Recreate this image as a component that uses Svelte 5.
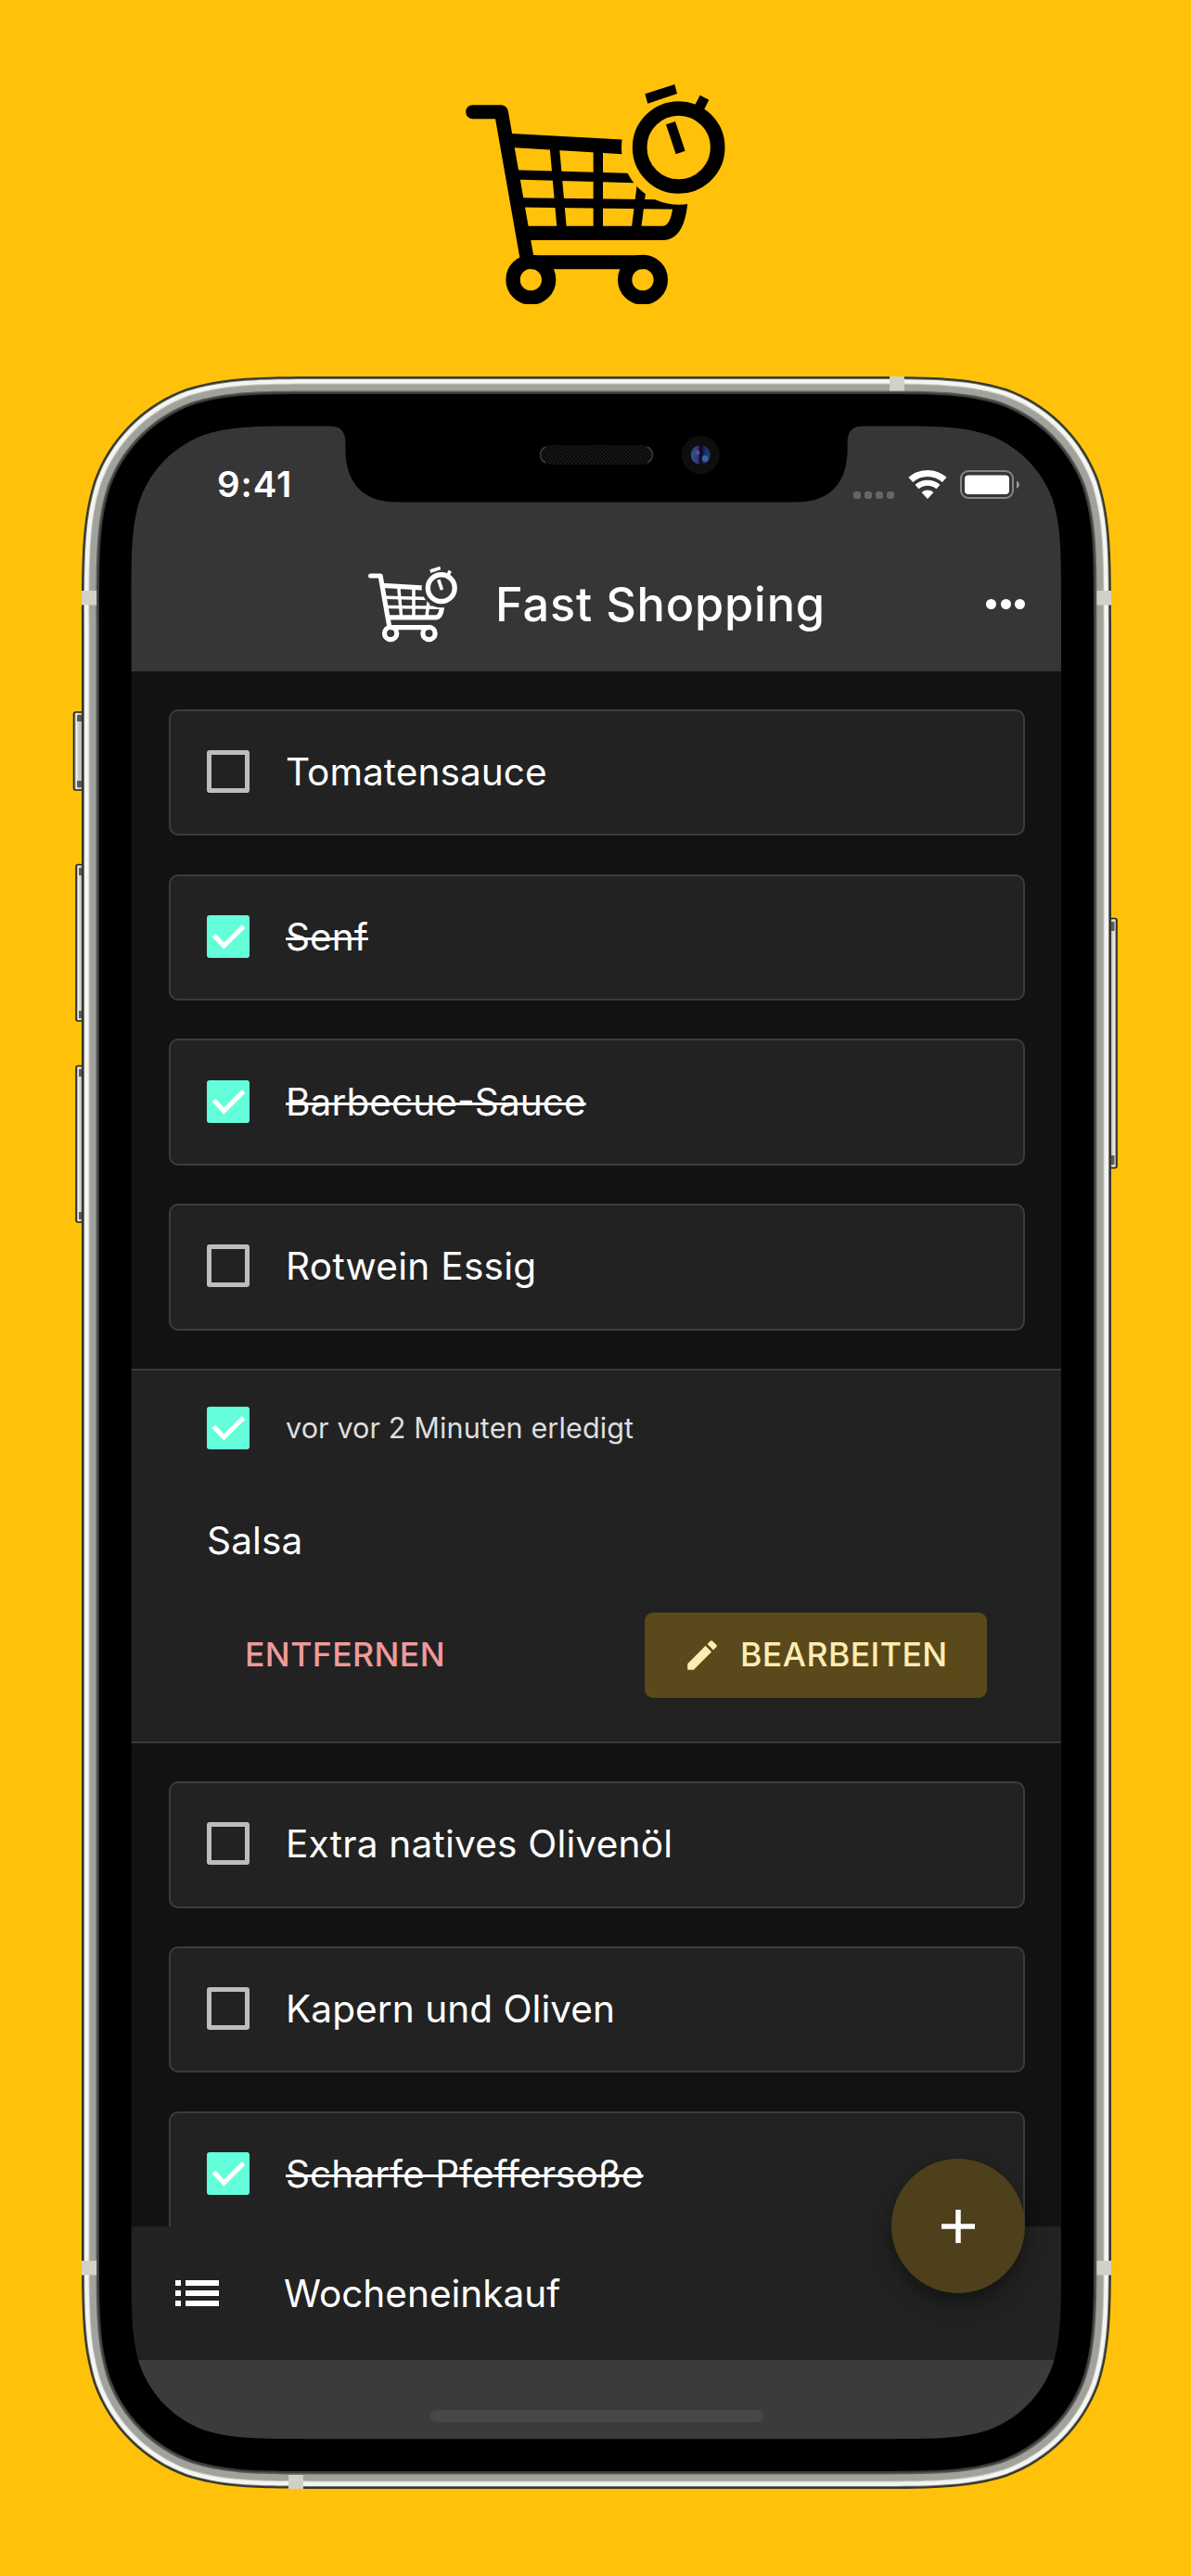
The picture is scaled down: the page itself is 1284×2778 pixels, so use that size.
<script>
  const before = [
    { name: 'Tomatensauce', done: false, fit: 'regular' },
    { name: 'Senf', done: true, fit: 'regular' },
    { name: 'Barbecue-Sauce', done: true, fit: 'raised' },
    { name: 'Rotwein Essig', done: false, fit: 'wide' },
  ];
  const after = [
    { name: 'Extra natives Olivenöl', done: false, fit: 'airy' },
    { name: 'Kapern und Oliven', done: false, fit: 'regular' },
    { name: 'Scharfe Pfeffersoße', done: true, fit: 'regular' },
  ];

  // Rounded rectangle with continuous-curvature corners.
  function squircle(x, y, w, h, r) {
    const corner = [
      [1.0885, 0], [0.8684, 0], [0.6315, 0.0749],
      [0.3728, 0.1691], [0.1691, 0.3728], [0.0749, 0.6315],
      [0, 0.8684], [0, 1.0885], [0, 1.5287],
    ];
    const place = (fx, fy, list) =>
      list.map(([a, b]) => `${(fx ? x + w - a * r : x + a * r).toFixed(2)} ${(fy ? y + h - b * r : y + b * r).toFixed(2)}`);
    const curve = (p) => `C${p.slice(0, 3).join(' ')}C${p.slice(3, 6).join(' ')}C${p.slice(6, 9).join(' ')}`;
    const full = [[1.5287, 0], ...corner];
    const rev = [...full].reverse();
    const tr = place(1, 0, full), br = place(1, 1, rev), bl = place(0, 1, full), tl = place(0, 0, rev);
    return `M${tr[0]}${curve(tr.slice(1))}L${br[0]}${curve(br.slice(1))}L${bl[0]}${curve(bl.slice(1))}L${tl[0]}${curve(tl.slice(1))}Z`;
  }

  const inset = (n, r) => squircle(n, n, 1110 - 2 * n, 2278 - 2 * n, r);
  const bezel = inset(19, 159) + squircle(53.6, 53.4, 1002.4, 2170.8, 125);
  // Metal bands end underneath the bezel, so only the bezel has an edge at the screen.
  const ring = (n, r) => inset(n, r) + inset(28, 150);
</script>

{#snippet cart(id)}
  <svg class="cart" viewBox="66 63 840 712" fill="none" stroke="currentColor">
    <mask id={id} maskUnits="userSpaceOnUse" x="0" y="0" width="990" height="840">
      <rect width="990" height="840" fill="#fff" stroke="none" />
      <circle cx="755" cy="267" r="185" fill="#000" stroke="none" />
    </mask>
    <g mask="url(#{id})">
      <path d="M89 152H181L265 630" stroke-width="45" stroke-linecap="round" stroke-linejoin="round" />
      <path d="M200 221L600 243V290L200 266Z" fill="currentColor" stroke="none" />
      <path d="M220 355L640 367M240 445L760 452" stroke-width="31" />
      <path d="M353 260L377 530M494.500 265V530M638 370L618 530" stroke-width="31" />
      <path d="M260 544H703C742 544 758 500 762 430" stroke-width="46" />
    </g>
    <path d="M277 638.500H640" stroke-width="45" />
    <circle cx="277" cy="695" r="58" stroke-width="46" />
    <circle cx="639" cy="695" r="58" stroke-width="46" />
    <circle cx="755" cy="267" r="126" stroke-width="47" />
    <path d="M646 94L742 63L750 93L655 125ZM824 98L853 113L832 155L805 135ZM714 193L744 183L776 278L746 289Z" fill="currentColor" stroke="none" />
  </svg>
{/snippet}

{#snippet checkbox(done)}
  <span class="box" class:done>
    {#if done}
      <svg viewBox="0 0 46 46"><path d="M7.500 21.500L18.400 33L39.500 12" fill="none" stroke="#fff" stroke-width="5" /></svg>
    {/if}
  </span>
{/snippet}

{#snippet card(item)}
  <li class="card">
    {@render checkbox(item.done)}
    <span class="name {item.fit}" class:struck={item.done}>{item.name}</span>
  </li>
{/snippet}

<main>
  <div class="hero">{@render cart('hero-cut')}</div>

  <div class="phone">
    <div class="screen">
      <header>
        <div class="status">
          <span class="time">9:41</span>
          <div class="indicators">
            <div class="signal"><i></i><i></i><i></i><i></i></div>
            <svg class="wifi" viewBox="-21 -31 42 31" fill="none" stroke="#fff">
              <path d="M-18.200 -20.600A27.500 27.500 0 0 1 18.200 -20.600" stroke-width="7" />
              <path d="M-11.500 -13A17.400 17.400 0 0 1 11.500 -13" stroke-width="6" />
              <path d="M0 0L-6.500 -7A9.800 9.800 0 0 1 6.500 -7Z" fill="#fff" stroke="none" />
            </svg>
            <svg class="battery" viewBox="0 0 65 31">
              <rect x="1" y="1" width="56" height="29" rx="8" fill="none" stroke="#868686" stroke-width="2" />
              <rect x="5" y="5.500" width="48" height="20.500" rx="4" fill="#fff" />
              <path d="M61 11.500Q64 13 64 15.500T61 20Z" fill="#9a9a9a" />
            </svg>
          </div>
        </div>
        <div class="appbar">
          <div class="brand">{@render cart('brand-cut')}</div>
          <h1>Fast Shopping</h1>
          <div class="more"><i></i><i></i><i></i></div>
        </div>
      </header>

      <div class="content">
        <ul>
          {#each before as item}{@render card(item)}{/each}
          <li class="open">
            <div class="meta">
              {@render checkbox(true)}
              <span class="ago">vor vor 2 Minuten erledigt</span>
            </div>
            <div class="title">Salsa</div>
            <div class="actions">
              <button class="remove">ENTFERNEN</button>
              <button class="edit">
                <svg viewBox="0 0 24 24"><path fill="currentColor" d="M3 17.250V21h3.750L17.810 9.940l-3.750-3.750L3 17.250zM20.710 7.040a1 1 0 0 0 0-1.410l-2.340-2.340a1 1 0 0 0-1.410 0l-1.830 1.830 3.750 3.750 1.830-1.830z" /></svg>
                <span>BEARBEITEN</span>
              </button>
            </div>
          </li>
          {#each after as item}{@render card(item)}{/each}
        </ul>
      </div>

      <footer>
        <svg class="list" viewBox="0 0 47 28" fill="#fff"><path d="M0 0H6V6H0ZM11 0H47V6H11ZM0 11H6V17H0ZM11 11H47V17H11ZM0 22H6V28H0ZM11 22H47V28H11Z" /></svg>
        <span class="listname">Wocheneinkauf</span>
        <button class="fab" aria-label="+">
          <svg viewBox="0 0 36 36"><path d="M18 0V36M0 18H36" stroke="#fff" stroke-width="5.500" /></svg>
        </button>
      </footer>
      <div class="home"><span></span></div>
    </div>

    <svg class="frame" viewBox="-12 0 1134 2278" fill-rule="evenodd">
      <defs>
        <linearGradient id="key" x1="0" x2="1" y1="0" y2="0">
          <stop offset="0" stop-color="#55564f" /><stop offset=".25" stop-color="#f0f0ec" />
          <stop offset=".5" stop-color="#c4c5c0" /><stop offset="1" stop-color="#b4b5b0" />
        </linearGradient>
        <linearGradient id="keyright" x1="1" x2="0" y1="0" y2="0">
          <stop offset="0" stop-color="#55564f" /><stop offset=".25" stop-color="#f0f0ec" />
          <stop offset=".5" stop-color="#c4c5c0" /><stop offset="1" stop-color="#b4b5b0" />
        </linearGradient>
        <pattern id="mesh" width="4" height="4" patternUnits="userSpaceOnUse">
          <rect width="4" height="4" fill="#090909" /><rect width="2" height="2" fill="#171717" /><rect x="2" y="2" width="2" height="2" fill="#171717" />
        </pattern>
        <linearGradient id="lens" x1="0" x2="1">
          <stop offset="0" stop-color="#1c5f96" /><stop offset=".35" stop-color="#3a3472" />
          <stop offset=".5" stop-color="#07071a" /><stop offset=".75" stop-color="#1d2f78" /><stop offset="1" stop-color="#164068" />
        </linearGradient>
      </defs>
      <g stroke="#22221c" stroke-width="1.500">
        <rect x="-8.500" y="362" width="12" height="84" rx="2" fill="url(#key)" />
        <rect x="-6" y="526.500" width="10" height="168.500" rx="2" fill="url(#key)" />
        <rect x="-6" y="743.500" width="10" height="168.500" rx="2" fill="url(#key)" />
        <rect x="1105" y="584.500" width="11" height="269" rx="2" fill="url(#keyright)" />
      </g>
      <path d="M-5 365H0V372H-5ZM-5 436H0V443H-5ZM-3 530H0V538H-3ZM-3 684H0V692H-3ZM-3 747H0V755H-3ZM-3 901H0V909H-3ZM1110 588H1113.500V598H1110ZM1110 840H1113.500V850H1110Z" fill="#3e3e38" opacity=".8" />
      <path d={ring(0, 178)} fill="#34362c" />
      <path d={ring(2, 176)} fill="#74766f" />
      <path d={ring(3, 175)} fill="#f4f5f1" />
      <path d={ring(7.5, 170.5)} fill="#c8c9c4" />
      <path d={ring(8.5, 169.5)} fill="#a1a29b" />
      <path d={ring(15.5, 162.5)} fill="#5c5c58" />
      <path d={ring(17, 161)} fill="#3c3c3c" />
      <path d={bezel} fill="#000" />
      <path d="M0 231H16V246.500H0ZM1094.500 231H1110V246.500H1094.500ZM0 2032H16V2047.500H0ZM1094.500 2032H1110V2047.500H1094.500ZM871 0H887V15.500H871ZM223 2263H239V2278H223Z" fill="#d1d1c7" />
      <path d="M267 52V53.400H268C280 53.400 284.400 60 284.400 72V78C284.400 116 304 135.500 340 135.500H770C806 135.500 825.600 116 825.600 78V72C825.600 60 830 53.400 842 53.400H843V52Z" fill="#000" />
      <rect x="494.500" y="74.500" width="121" height="20" rx="10" fill="url(#mesh)" stroke="#101010" />
      <path d="M500 76Q494.500 79 494.500 84.500T500 93M610 76Q615.500 79 615.500 84.500T610 93" fill="none" stroke="#3c3c3c" stroke-width="1.500" />
      <circle cx="667.300" cy="84.500" r="20.500" fill="#0e0e0e" />
      <circle cx="667.300" cy="84.500" r="10.500" fill="url(#lens)" />
      <circle cx="672" cy="88.500" r="3.500" fill="#3a78a4" opacity=".8" />
      <circle cx="664" cy="82" r="2.500" fill="#704a9c" opacity=".8" />
    </svg>
  </div>
</main>

<style>
  :global(body) { background: #ffc10a; }
  main {
    width: 1284px;
    height: 2778px;
    overflow: hidden;
    background: #ffc10a;
    font-family: Inter, "Liberation Sans", sans-serif;
    color: #fff;
    display: flex;
    flex-direction: column;
  }
  h1, ul { margin: 0; padding: 0; font-weight: inherit; list-style: none; }
  svg { display: block; }
  i { display: block; }
  span, h1 { white-space: nowrap; }
  button { border: 0; background: none; padding: 0; font: inherit; color: inherit; }

  .hero { height: 315px; flex: none; padding: 91px 0 0 502px; color: #000; }
  .hero .cart { width: 280px; }
  .phone { position: relative; box-sizing: border-box; margin-left: 88px; padding: 53px; width: 1110px; height: 2278px; flex: none; }
  .frame { position: absolute; left: -12px; top: 0; width: 1134px; height: 2278px; pointer-events: none; }

  .screen {
    width: 1004px;
    height: 2172px;
    display: flex;
    flex-direction: column;
    background: #121212;
    overflow: hidden;
    border-radius: 100px;
  }
  header { height: 265px; flex: none; background: #363636; }
  .status { height: 126px; display: flex; align-items: center; justify-content: space-between; padding: 0 45px 0 93px; }
  .time { font-size: 38.500px; font-weight: 600; letter-spacing: .900px; }
  .indicators { display: flex; align-items: flex-end; }
  .signal { display: flex; gap: 4px; margin-right: 15px; }
  .signal i { width: 8px; height: 8px; border-radius: 3px; background: #666; }
  .wifi { width: 42px; height: 31px; margin-right: 14px; }
  .battery { width: 65px; height: 31px; }

  .appbar { height: 133px; display: flex; align-items: center; padding: 0 40px 0 256px; }
  .brand { width: 96px; }
  .brand .cart { width: 96px; height: 83px; }
  h1 { font-size: 50.500px; font-weight: 500; line-height: 60px; margin-left: 41px; letter-spacing: .800px; }
  .more { margin-left: auto; display: flex; gap: 4.500px; }
  .more i { width: 11px; height: 11px; border-radius: 50%; background: #fff; }

  .content { height: 1677px; flex: none; overflow: hidden; padding-top: 41px; box-sizing: border-box; }
  ul { display: flex; flex-direction: column; gap: 41.350px; }
  .card {
    box-sizing: border-box;
    height: 136.400px;
    flex: none;
    margin: 0 40px 0 41px;
    padding-left: 39px;
    display: flex;
    align-items: center;
    background: #222;
    border: 2px solid #3c3c3c;
    border-radius: 10px;
  }
  .box { box-sizing: border-box; width: 46px; height: 46px; flex: none; border: 5px solid #bdbdbd; border-radius: 3px; margin-bottom: 2px; }
  .box.done { border: 0; background: #64ffda; }
  .name { font-size: 40.600px; line-height: 48px; margin-left: 39px; }
  .regular { letter-spacing: .040px; }
  .airy { letter-spacing: .200px; }
  .wide { letter-spacing: .270px; }
  .raised { letter-spacing: .060px; font-feature-settings: "case"; }
  .struck { text-decoration: line-through; text-decoration-thickness: 3px; }

  .open {
    box-sizing: border-box;
    height: 404px;
    flex: none;
    background: #222;
    border: solid #3c3c3c;
    border-width: 2px 0;
    padding: 38px 81px 0 82px;
  }
  .meta { display: flex; align-items: center; height: 48px; }
  .meta .box { margin-bottom: 0; }
  .ago { font-size: 30.600px; color: #dedede; margin-left: 39px; letter-spacing: .090px; }
  .title { font-size: 40.600px; line-height: 48px; margin-top: 74px; letter-spacing: .100px; }
  .actions { display: flex; justify-content: space-between; height: 92px; margin-top: 53px; }
  .remove { font-size: 35.600px; font-weight: 500; color: #ef9a9a; padding-left: 41px; letter-spacing: .400px; }
  .edit {
    width: 369px;
    display: flex;
    align-items: center;
    background: #5a491a;
    color: #ffecb3;
    border-radius: 9px;
    font-size: 35.600px;
    font-weight: 500;
    letter-spacing: .450px;
    padding-left: 41px;
    box-sizing: border-box;
  }
  .edit svg { width: 42px; height: 42px; margin-right: 20px; }

  footer { position: relative; height: 144px; flex: none; background: #222; display: flex; align-items: center; padding-left: 48px; }
  .list { width: 47px; height: 28px; }
  .listname { font-size: 40.600px; margin-left: 70px; letter-spacing: -.030px; }
  .fab {
    position: absolute;
    right: 40px;
    top: -73px;
    width: 144px;
    height: 145px;
    border-radius: 50%;
    background: #4e401b;
    display: flex;
    align-items: center;
    justify-content: center;
    box-shadow: 0 8px 12px rgba(0, 0, 0, .2), 0 14px 28px rgba(0, 0, 0, .22);
  }
  .fab svg { width: 36px; height: 36px; }
  .home { flex: 1; background: #3b3b3b; display: flex; justify-content: center; padding-top: 54px; }
  .home span { width: 359px; height: 13px; border-radius: 7px; background: #474747; }
</style>
